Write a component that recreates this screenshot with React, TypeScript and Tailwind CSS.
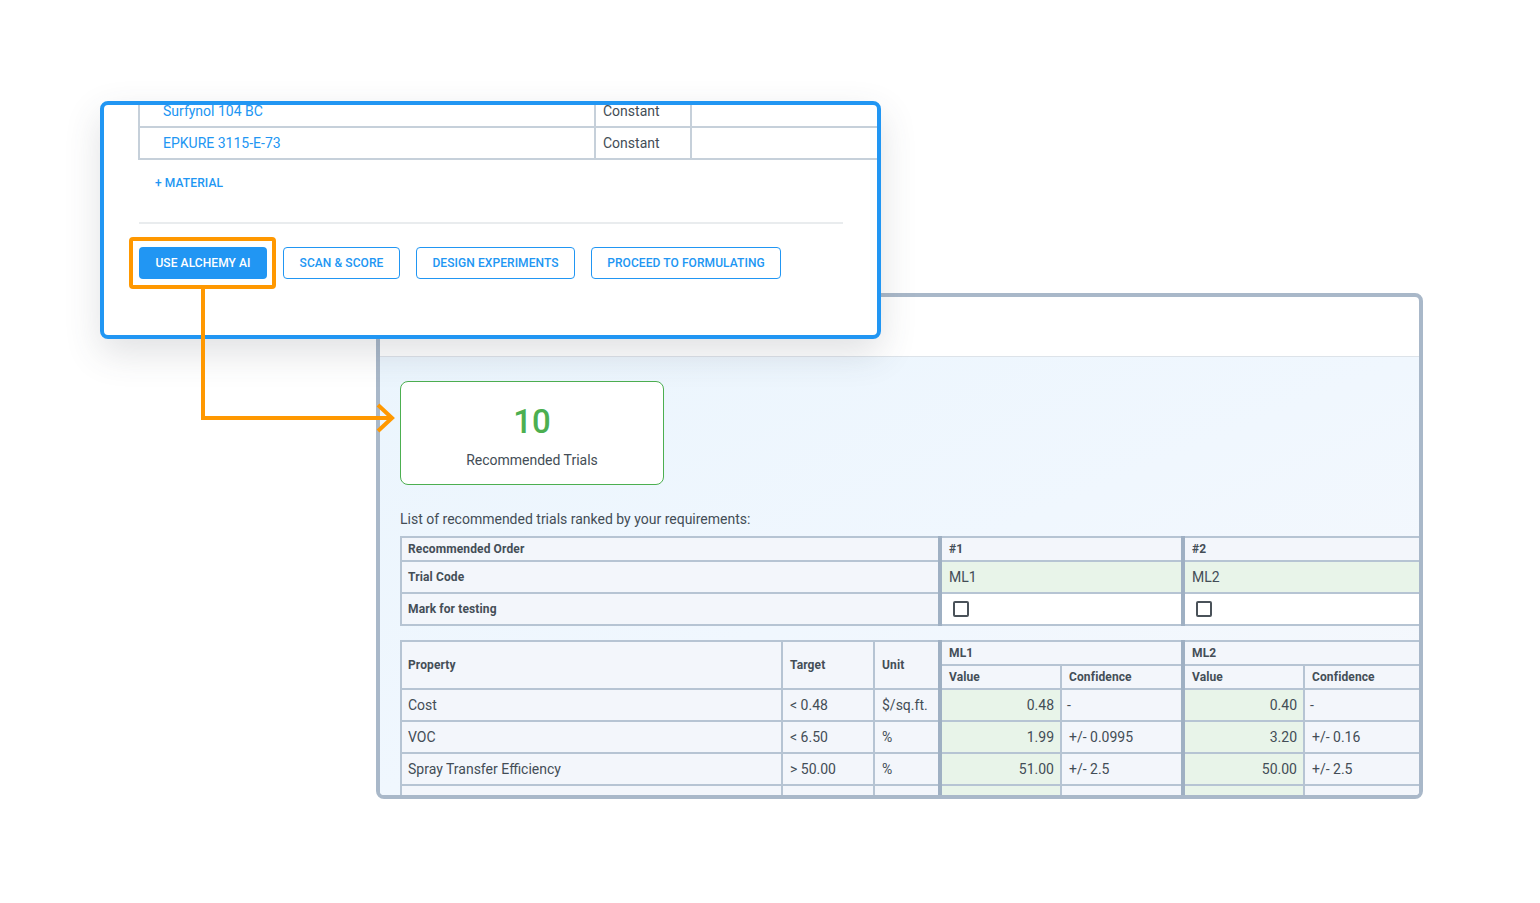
import React from 'react';

const cellLine = 'border-2 border-[#b6c4d3]';
const head = `${cellLine} pl-[7px] pr-[6px] text-left text-[12px] tracking-[0.12px] font-bold text-[#444e57]`;
const body = `${cellLine} pl-[7px] pr-[6px] text-left text-[14px] font-normal text-[#434d56]`;
const first = '!pl-[6px]';
const sepL = 'border-l-[4px] border-l-[#9fb0c3]';
const green = 'bg-[#e8f4e9]';

const results = [
  { name: 'Cost', target: '< 0.48', unit: '$/sq.ft.', v1: '0.48', c1: '-', v2: '0.40', c2: '-' },
  { name: 'VOC', target: '< 6.50', unit: '%', v1: '1.99', c1: '+/- 0.0995', v2: '3.20', c2: '+/- 0.16' },
  { name: 'Spray Transfer Efficiency', target: '> 50.00', unit: '%', v1: '51.00', c1: '+/- 2.5', v2: '50.00', c2: '+/- 2.5' },
  { name: '', target: '', unit: '', v1: '', c1: '', v2: '', c2: '' },
];

function Checkbox() {
  return <div className="w-4 h-4 ml-[11px] rounded-[2px] border-2 border-[#4a5259] bg-white" />;
}

function FrontCard() {
  const line = 'border-2 border-[#c6d0da]';
  const outline = 'h-8 rounded-[4px] border border-[#2196f3] bg-white text-[12px] tracking-[0.08px] font-medium text-[#2196f3]';
  return (
    <div className="absolute left-[100px] top-[101px] w-[781px] h-[238px] rounded-[8px] border-4 border-[#2196f3] bg-white overflow-hidden shadow-[0_14px_36px_rgba(60,70,80,0.16)]">
      <table className="table-fixed border-collapse w-[741px] ml-[34px] -mt-[11px] text-[14px]">
        <colgroup>
          <col className="w-[456px]" />
          <col className="w-[96px]" />
          <col className="w-[189px]" />
        </colgroup>
        <tbody>
          {['Surfynol 104 BC', 'EPKURE 3115-E-73'].map(name => (
            <tr key={name} className="h-8">
              <td className={`${line} pl-[23px] text-[#2196f3]`}>{name}</td>
              <td className={`${line} px-[7px] text-[#434d56]`}>Constant</td>
              <td className={line} />
            </tr>
          ))}
        </tbody>
      </table>
      <div className="ml-[51px] mt-[15px] text-[12px] leading-4 tracking-[0.1px] font-medium text-[#2196f3]">+ MATERIAL</div>
      <div className="ml-[35px] w-[704px] mt-[31px] border-t-2 border-[#e9ecee]" />
      <div className="ml-[35px] mt-[23px] flex gap-4">
        <button className="h-8 w-[128px] rounded-[4px] bg-[#2196f3] text-[12px] tracking-[0.08px] font-medium text-white">USE ALCHEMY AI</button>
        <button className={`${outline} w-[117px]`}>SCAN &amp; SCORE</button>
        <button className={`${outline} w-[159px]`}>DESIGN EXPERIMENTS</button>
        <button className={`${outline} w-[190px]`}>PROCEED TO FORMULATING</button>
      </div>
    </div>
  );
}

function BackPanel() {
  return (
    <div className="ml-[376px] w-[1047px] h-[506px] rounded-[8px] border-4 border-[#a9b8c9] bg-white overflow-hidden flex flex-col">
      <div className="h-[60px] shrink-0 border-b border-[#dde3e9]" />
      <div className="flex-1 pl-5 pt-6 bg-gradient-to-br from-[#ebf5fd] via-[#f0f7fe] to-[#f6f8fc] overflow-hidden">
        <div className="w-[264px] h-[104px] rounded-[8px] border border-[#4caf50] bg-white flex flex-col items-center">
          <div className="mt-[20px] text-[33px] leading-[40px] font-medium text-[#4caf50]">10</div>
          <div className="mt-[8px] text-[14px] leading-5 text-[#434d56]">Recommended Trials</div>
        </div>
        <p className="mt-6 text-[14px] leading-5 text-[#434d56]">List of recommended trials ranked by your requirements:</p>

        <table className="mt-[7px] table-fixed border-collapse w-[1021px]">
          <colgroup>
            <col className="w-[539px]" />
            <col className="w-[243px]" />
            <col className="w-[239px]" />
          </colgroup>
          <tbody>
            <tr className="h-6 bg-[#f3f6fb]">
              <th className={`${head} ${first}`}>Recommended Order</th>
              <th className={`${head} ${sepL}`}>#1</th>
              <th className={`${head} ${sepL}`}>#2</th>
            </tr>
            <tr className="h-8">
              <th className={`${head} ${first} bg-[#f3f6fb]`}>Trial Code</th>
              <td className={`${body} ${sepL} ${green}`}>ML1</td>
              <td className={`${body} ${sepL} ${green}`}>ML2</td>
            </tr>
            <tr className="h-8">
              <th className={`${head} ${first} bg-[#f3f6fb]`}>Mark for testing</th>
              <td className={`${cellLine} ${sepL} bg-white`}><Checkbox /></td>
              <td className={`${cellLine} ${sepL} bg-white`}><Checkbox /></td>
            </tr>
          </tbody>
        </table>

        <table className="mt-[14px] table-fixed border-collapse w-[1021px] bg-[#f3f6fb]">
          <colgroup>
            <col className="w-[381px]" />
            <col className="w-[92px]" />
            <col className="w-[66px]" />
            <col className="w-[121px]" />
            <col className="w-[122px]" />
            <col className="w-[121px]" />
            <col className="w-[118px]" />
          </colgroup>
          <thead>
            <tr className="h-6">
              <th rowSpan={2} className={`${head} ${first}`}>Property</th>
              <th rowSpan={2} className={head}>Target</th>
              <th rowSpan={2} className={head}>Unit</th>
              <th colSpan={2} className={`${head} ${sepL}`}>ML1</th>
              <th colSpan={2} className={`${head} ${sepL}`}>ML2</th>
            </tr>
            <tr className="h-6">
              <th className={`${head} ${sepL}`}>Value</th>
              <th className={head}>Confidence</th>
              <th className={`${head} ${sepL}`}>Value</th>
              <th className={head}>Confidence</th>
            </tr>
          </thead>
          <tbody>
            {results.map((r, i) => (
              <tr key={i} className="h-8">
                <td className={`${body} ${first}`}>{r.name}</td>
                <td className={body}>{r.target}</td>
                <td className={body}>{r.unit}</td>
                <td className={`${body} ${sepL} ${green} !text-right`}>{r.v1}</td>
                <td className={`${body} ${r.c1 === '-' ? '!pl-[5px]' : ''}`}>{r.c1}</td>
                <td className={`${body} ${sepL} ${green} !text-right`}>{r.v2}</td>
                <td className={`${body} ${r.c2 === '-' ? '!pl-[5px]' : ''}`}>{r.c2}</td>
              </tr>
            ))}
          </tbody>
        </table>
      </div>
    </div>
  );
}

export default function App() {
  return (
    <div className="relative w-[1540px] h-[903px] overflow-hidden bg-white pt-[293px] font-['Roboto',sans-serif]">
      <BackPanel />
      <FrontCard />

      {/* highlight round the first button, and the arrow to the result */}
      <div className="absolute left-[129px] top-[237px] w-[147px] h-[52px] rounded-[4px] border-4 border-[#ff9800]" />
      <svg className="absolute left-0 top-0" width="1540" height="903" fill="none" stroke="#ff9800" strokeWidth="4">
        <path d="M203 289V418H390" />
        <path d="M378 405L392 418L378 431" />
      </svg>
    </div>
  );
}
